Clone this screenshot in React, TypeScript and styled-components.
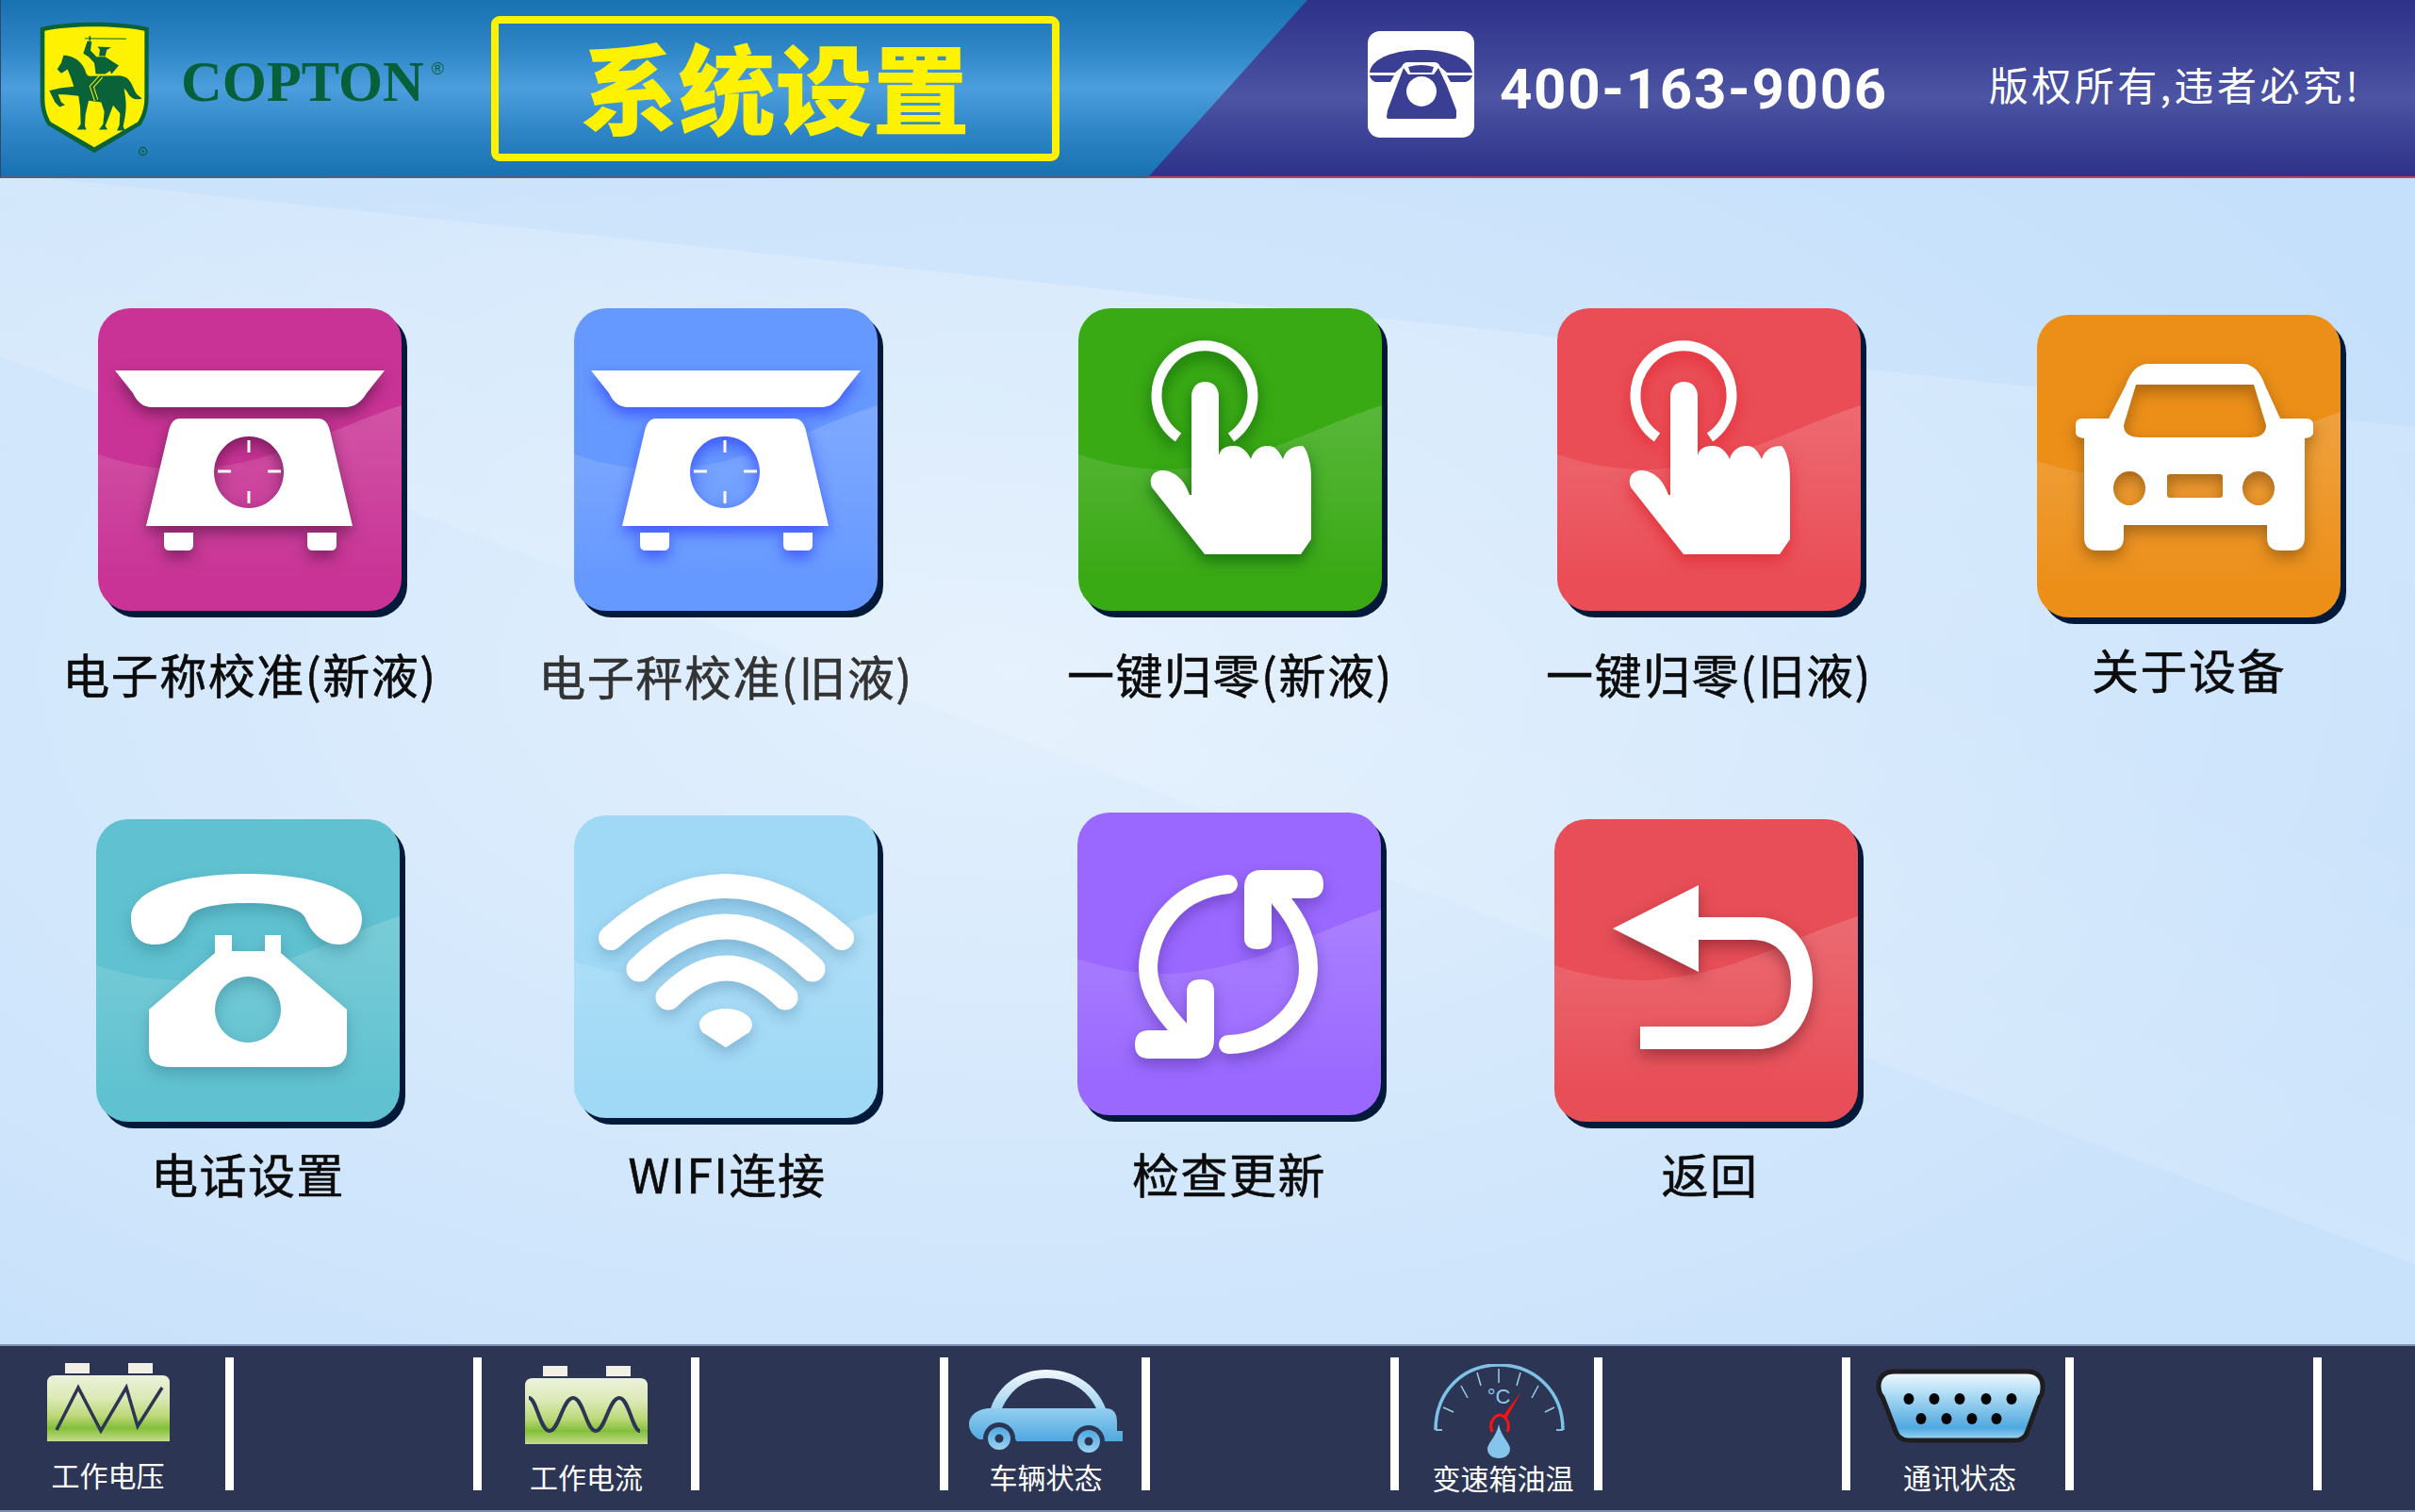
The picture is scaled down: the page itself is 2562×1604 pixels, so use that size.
import React from "react";
import styled, { createGlobalStyle } from "styled-components";

const CJK = '"Noto Sans CJK SC", "Noto Sans", sans-serif';

const Global = createGlobalStyle`
  html, body { margin: 0; padding: 0; background: #cfe5fc; }
  #root { width: 2562px; height: 1604px; overflow: hidden; }
`;

const Page = styled.div`
  width: 2562px;
  height: 1604px;
  display: flex;
  flex-direction: column;
  font-family: ${CJK};
  overflow: hidden;
`;

const Header = styled.header`
  flex: 0 0 189px;
  box-sizing: border-box;
  display: flex;
  border-bottom: 2px solid #56606f;
  border-left: 1px solid #36485f;
  background: linear-gradient(180deg, #1871b0 0%, #2e86c6 28%, #4c9edd 50%, #2e86c6 74%, #1871b0 100%);
`;

const HeaderLeft = styled.div`
  flex: 0 0 1216px;
  display: flex;
  align-items: center;
`;

const Shield = styled.svg`
  flex: none;
  width: 120px;
  height: 147px;
  margin-left: 39px;
`;

const Brand = styled.div`
  flex: 0 0 329px;
  margin-left: 32px;
  padding-bottom: 14px;
  font-family: "Liberation Serif", serif;
  font-weight: 700;
  font-size: 60.5px;
  line-height: 60px;
  color: #06603a;
  white-space: nowrap;
  sup {
    font-family: "Liberation Sans", sans-serif;
    font-weight: 400;
    font-size: 18px;
    line-height: 0;
    vertical-align: 28px;
    margin-left: 8px;
  }
`;

const TitleBox = styled.div`
  flex: 0 0 603px;
  box-sizing: border-box;
  height: 154px;
  padding-bottom: 6px;
  border: 8px solid #fff200;
  border-radius: 9px;
  display: flex;
  align-items: center;
  justify-content: center;
  color: #fff200;
  font-size: 103px;
  font-weight: 900;
  line-height: 1;
  white-space: nowrap;
`;

const HeaderRight = styled.div`
  flex: 1;
  margin-bottom: -2px;
  box-sizing: border-box;
  display: flex;
  align-items: center;
  padding-left: 234px;
  border-bottom: 2px solid #c8404f;
  background: linear-gradient(180deg, #2e3289 0%, #3c4296 28%, #4c54a3 55%, #3c4296 78%, #2e3289 100%);
  clip-path: polygon(170px 0, 100% 0, 100% 100%, 0 100%);
`;

const PhoneBadge = styled.div`
  flex: none;
  width: 113px;
  height: 113px;
  margin-bottom: 8px;
  border-radius: 13px;
  background: #fff;
  display: flex;
`;

const PhoneNumber = styled.div`
  flex: none;
  margin-left: 27px;
  margin-top: 2px;
  font-family: Roboto, sans-serif;
  font-weight: 700;
  font-size: 60px;
  letter-spacing: 1.7px;
  line-height: 1;
  color: #fff;
  white-space: nowrap;
`;

const Rights = styled.div`
  flex: none;
  margin-left: 107px;
  margin-bottom: 10px;
  font-size: 42px;
  letter-spacing: 3.4px;
  line-height: 1;
  color: #fff;
  white-space: nowrap;
`;

const Main = styled.main`
  flex: 1;
  min-height: 0;
  background:
    linear-gradient(186deg, rgba(186, 218, 250, 0.28) 262px, rgba(255, 255, 255, 0.06) 263px, transparent 620px),
    linear-gradient(200.6deg, transparent 650px, rgba(255, 255, 255, 0.13) 1078px, transparent 1079px),
    radial-gradient(ellipse 1700px 900px at 42% 42%, #e3f0fd 0%, #d6e9fc 50%, #c9e2fb 100%);
`;

const TileRow = styled.div<{ $h: number }>`
  height: ${(p) => p.$h}px;
  display: flex;
  align-items: flex-start;
`;

const Item = styled.div<{ $ml: number; $mt: number }>`
  flex: 0 0 322px;
  width: 322px;
  min-width: 0;
  margin-left: ${(p) => p.$ml}px;
  margin-top: ${(p) => p.$mt}px;
  display: flex;
  flex-direction: column;
  align-items: center;
`;

const Tile = styled.div<{ $c: string }>`
  flex: none;
  width: 322px;
  height: 321px;
  border-radius: 34px;
  background: ${(p) => p.$c};
  box-shadow: 6px 7px 0 #021a3a;
  overflow: hidden;
`;

const TileArt = styled.svg`
  display: block;
  width: 322px;
  height: 321px;
`;

const Glyph = styled.g<{ $s: string }>`
  filter: drop-shadow(0 7px 8px ${(p) => p.$s});
`;

const Label = styled.div<{ $mt: number; $c?: string; $dx?: number }>`
  flex: none;
  margin-top: ${(p) => p.$mt}px;
  margin-left: ${(p) => p.$dx ?? 0}px;
  font-size: 50px;
  line-height: 50px;
  letter-spacing: 1.5px;
  color: ${(p) => p.$c ?? "#0c0c0c"};
  -webkit-text-stroke: 0.6px currentColor;
  white-space: nowrap;
`;

const Footer = styled.footer`
  flex: 0 0 178px;
  box-sizing: border-box;
  display: flex;
  align-items: flex-start;
  background: #2c3654;
  border-top: 2px solid #7d8fb0;
  border-bottom: 2px solid #7d8fb0;
`;

const Divider = styled.div`
  flex: 0 0 9px;
  height: 141px;
  margin-top: 12px;
  background: #fff;
`;

const Segment = styled.div<{ $w: number }>`
  flex: 0 0 ${(p) => p.$w}px;
  display: flex;
  flex-direction: column;
  align-items: center;
`;

const Stat = styled.svg<{ $mt: number; $dx?: number }>`
  display: block;
  margin-top: ${(p) => p.$mt}px;
  margin-left: ${(p) => p.$dx ?? 0}px;
`;

const StatLabel = styled.div<{ $mt: number; $dx?: number }>`
  margin-top: ${(p) => p.$mt}px;
  margin-left: ${(p) => p.$dx ?? 0}px;
  font-size: 30px;
  line-height: 30px;
  color: #fff;
  white-space: nowrap;
`;

function ScaleIcon({ s }: { s: string }) {
  return (
    <Glyph $s={s}>
      <path
        fillRule="evenodd"
        fill="#fff"
        d="M18 66H304L285 90Q276 105 262 105H57Q44 105 37 90ZM87 117H233Q243 117 246 130L270 231H51L75 130Q78 117 87 117ZM160 136A37 38 0 1 0 160.01 136Z"
      />
      <path fill="#fff" d="M70 238H101V251Q101 257 95 257H76Q70 257 70 251ZM222 238H253V251Q253 257 247 257H228Q222 257 222 251Z" />
      <path stroke="#fff" strokeWidth="3" d="M160 140V153M160 194V207M127 173H141M180 173H194" />
    </Glyph>
  );
}

function HandIcon({ s }: { s: string }) {
  return (
    <Glyph $s={s}>
      <path d="M106 137A51 53 0 1 1 162 137" fill="none" stroke="#fff" strokeWidth="11" />
      <path
        fill="#fff"
        d="M120 92Q122 78 134.5 78Q147 78 149 92V156C151 148 158 146 165 146C172 146 178 150 183 160C186 150 193 146 201 146C208 146 212 150 217 160C220 150 228 146 238 146C243 150 247 165 247 178V245L236 261H134L78 190C74 180 80 172 89 172C100 172 112 180 118 198L120 198Z"
      />
    </Glyph>
  );
}

function CarIcon({ s }: { s: string }) {
  return (
    <Glyph $s={s}>
      <path
        fillRule="evenodd"
        fill="#fff"
        d="M118 52H218Q234 52 242 75L258 110H286Q293 110 293 117V125Q293 130 284 131V236Q284 250 270 250H258Q244 250 244 236V223H92V236Q92 250 78 250H64Q50 250 50 236V131Q41 130 41 125V117Q41 110 48 110H76L94 75Q102 52 118 52ZM105 74L92 117Q92 130 110 130H226Q243 130 243 117L230 74ZM98 166A17 18 0 1 0 98.01 166ZM235 166A17 18 0 1 0 235.01 166ZM141 169H194Q197 169 197 172V191Q197 194 194 194H141Q138 194 138 191V172Q138 169 141 169Z"
      />
    </Glyph>
  );
}

function PhoneIcon({ s }: { s: string }) {
  return (
    <Glyph $s={s}>
      <path
        fill="#fff"
        d="M37 105C37 75 90 58 160 58C230 58 282 75 282 105C282 125 268 133 258 133C240 133 228 120 222 105C218 95 195 89 160 89C125 89 102 95 98 105C92 120 82 133 62 133C48 133 37 125 37 105Z"
      />
      <path
        fillRule="evenodd"
        fill="#fff"
        d="M126 123H144V140H179V123H196V142L266 202V245Q266 263 243 263H80Q56 263 56 245V202L126 142ZM161 167A35 35 0 1 0 161.01 167Z"
      />
    </Glyph>
  );
}

function WifiIcon({ s }: { s: string }) {
  return (
    <Glyph $s={s}>
      <g fill="none" stroke="#fff" strokeLinecap="round">
        <path strokeWidth="26" d="M39 130Q161 20 284 130" />
        <path strokeWidth="27" d="M69 163Q161 73 253 163" />
        <path strokeWidth="27" d="M100 193Q161 131 224 193" />
      </g>
      <path fill="#fff" d="M161 205C175 205 189 212 189 222C189 226 187 228 186 230L163 245Q161 247 159 245L136 230C135 228 133 226 133 222C133 212 147 205 161 205Z" />
    </Glyph>
  );
}

function SyncIcon({ s }: { s: string }) {
  return (
    <Glyph $s={s}>
      <g fill="none" stroke="#fff" strokeWidth="20" strokeLinecap="round">
        <path d="M160 76C100 82 75 130 75 165C75 190 90 210 110 232" />
        <path d="M215 92C235 115 245 140 245 165C245 205 210 245 160 246" />
      </g>
      <path fill="#fff" d="M195 61H246Q261 61 261 76Q261 91 246 91H206V133Q206 145 191 145Q177 145 177 133V80Q177 61 195 61Z" />
      <path fill="#fff" d="M131 177Q145 177 145 190V240Q145 261 125 261H76Q61 261 61 246Q61 231 76 231H116V190Q116 177 131 177Z" />
    </Glyph>
  );
}

function BackIcon({ s }: { s: string }) {
  return (
    <Glyph $s={s}>
      <path
        fill="#fff"
        d="M62 116L153 70V104H215C250 104 274 130 274 172C274 215 250 244 215 244H91V220H210C235 220 251 205 251 172C251 145 235 128 210 128H153V162Z"
      />
    </Glyph>
  );
}

type TileDef = {
  c: string;
  s: string;
  icon: React.ComponentType<{ s: string }>;
  label: string;
  ml: number;
  mt: number;
  lm: number;
  lc?: string;
  ldx?: number;
};

const rowOne: TileDef[] = [
  { c: "#c93395", s: "rgba(70,15,60,.6)", icon: ScaleIcon, label: "电子称校准(新液)", ml: 104, mt: 138, lm: 41 },
  { c: "#6699ff", s: "#3d55ff", icon: ScaleIcon, label: "电子秤校准(旧液)", ml: 183, mt: 138, lm: 43, lc: "#333" },
  { c: "#39a914", s: "rgba(10,90,10,.7)", icon: HandIcon, label: "一键归零(新液)", ml: 213, mt: 138, lm: 41 },
  { c: "#ea4d56", s: "rgba(225,40,50,.8)", icon: HandIcon, label: "一键归零(旧液)", ml: 186, mt: 138, lm: 41 },
  { c: "#ec8f19", s: "rgba(120,70,10,.6)", icon: CarIcon, label: "关于设备", ml: 187, mt: 145, lm: 29 },
];

const rowTwo: TileDef[] = [
  { c: "#60c2d0", s: "rgba(40,110,130,.4)", icon: PhoneIcon, label: "电话设置", ml: 102, mt: 20, lm: 29 },
  { c: "#a0d9f6", s: "rgba(60,110,150,.35)", icon: WifiIcon, label: "WIFI连接", ml: 185, mt: 16, lm: 33, ldx: 3 },
  { c: "#9a68ff", s: "rgba(60,30,130,.4)", icon: SyncIcon, label: "检查更新", ml: 212, mt: 13, lm: 36 },
  { c: "#e84e57", s: "rgba(90,20,30,.5)", icon: BackIcon, label: "返回", ml: 184, mt: 20, lm: 29, ldx: 8 },
];

function TileItem({ t, id }: { t: TileDef; id: string }) {
  const Icon = t.icon;
  return (
    <Item $ml={t.ml} $mt={t.mt}>
      <Tile $c={t.c}>
        <TileArt viewBox="0 0 322 321">
          <defs>
            <linearGradient id={id} x1="0" y1="0" x2="0" y2="1">
              <stop offset="0" stopColor="#fff" stopOpacity="0.16" />
              <stop offset="0.35" stopColor="#fff" stopOpacity="0.1" />
              <stop offset="0.85" stopColor="#fff" stopOpacity="0" />
            </linearGradient>
          </defs>
          <path fill={`url(#${id})`} d="M0 155C30 166 70 172 100 171C190 165 240 130 322 103V321H0Z" />
          <Icon s={t.s} />
        </TileArt>
      </Tile>
      <Label $mt={t.lm} $c={t.lc} $dx={t.ldx}>
        {t.label}
      </Label>
    </Item>
  );
}

function Battery({ id, d, sw }: { id: string; d: string; sw: number }) {
  return (
    <>
      <defs>
        <linearGradient id={id} x1="0" y1="0" x2="0" y2="1">
          <stop offset="0" stopColor="#ecf2dd" />
          <stop offset="0.35" stopColor="#dbe9b4" />
          <stop offset="0.62" stopColor="#bcd878" />
          <stop offset="0.8" stopColor="#83bf3a" />
          <stop offset="1" stopColor="#c4dc8a" />
        </linearGradient>
      </defs>
      <rect x="19" y="0" width="26" height="11" fill="#f2f0e6" />
      <rect x="86" y="0" width="26" height="11" fill="#f2f0e6" />
      <path fill={`url(#${id})`} d="M8 13H122Q130 13 130 21V83H0V21Q0 13 8 13Z" />
      <path fill="none" stroke="#2c3654" strokeWidth={sw} strokeLinejoin="miter" d={d} />
    </>
  );
}

function CarStat() {
  return (
    <Stat $mt={25} $dx={2} width="163" height="90" viewBox="0 0 163 90">
      <defs>
        <linearGradient id="carRoof" x1="0" y1="0" x2="0" y2="1">
          <stop offset="0" stopColor="#f4f8fd" />
          <stop offset="1" stopColor="#9fd4f1" />
        </linearGradient>
        <linearGradient id="carBody" x1="0" y1="0" x2="0" y2="1">
          <stop offset="0" stopColor="#93cff0" />
          <stop offset="1" stopColor="#4ea8e0" />
        </linearGradient>
        <linearGradient id="carWheel" x1="0" y1="0" x2="0" y2="1">
          <stop offset="0" stopColor="#4ea8e0" />
          <stop offset="1" stopColor="#9bd2f0" />
        </linearGradient>
      </defs>
      <path
        fill="url(#carRoof)"
        d="M23 41C32 15 55 0 82 0C110 0 135 15 145 41H135C125 20 105 9 82 9C60 9 45 20 35 41Z"
      />
      <path fill="url(#carBody)" d="M23 41H145C152 41 157 45 157 55V65H163V76H15C5 72 0 65 0 58C0 48 10 41 23 41Z" />
      <circle cx="32" cy="73" r="17" fill="#2c3654" />
      <circle cx="127" cy="76" r="17" fill="#2c3654" />
      <path fill="#2c3654" d="M10 74H50V90H10ZM110 77H144V90H110Z" />
      <circle cx="32" cy="73" r="12" fill="url(#carWheel)" />
      <circle cx="127" cy="76" r="12" fill="url(#carWheel)" />
      <circle cx="32" cy="73" r="4.5" fill="#2c3654" />
      <circle cx="127" cy="76" r="4.5" fill="#2c3654" />
    </Stat>
  );
}

function GaugeStat() {
  return (
    <Stat $mt={19} $dx={6} width="140" height="100" viewBox="0 0 140 100">
      <path d="M2 70C2 30 30 1 69 1C108 1 137 30 137 70" fill="none" stroke="#7fc2e8" strokeWidth="3.5" />
      <path d="M2 70H9M137 70H130" stroke="#7fc2e8" strokeWidth="2" />
      <path
        d="M10 46L21 51M29 23L36 36M46 9L50 23M69 5V20M92 9L88 23M111 23L104 36M128 46L118 51"
        stroke="#9acde9"
        strokeWidth="1.5"
      />
      <text x="69" y="42" textAnchor="middle" fontFamily="Liberation Sans, sans-serif" fontSize="22" fill="#8ccaee">
        °C
      </text>
      <path d="M93 29L73 56L77 58Z" fill="#ff1010" />
      <path d="M62 72C58 62 64 55 70 54C76 55 82 62 78 72" fill="none" stroke="#ff1010" strokeWidth="3" />
      <path d="M69 64C72 78 81 84 81 90C81 96 76 100 69 100C62 100 57 96 57 90C57 84 66 78 69 64Z" fill="#85c5ec" />
    </Stat>
  );
}

function ConnectorStat() {
  const top = [35, 62, 89, 117, 144];
  const bottom = [48, 75, 102, 128];
  return (
    <Stat $mt={24} $dx={6} width="180" height="79" viewBox="0 0 180 79">
      <defs>
        <linearGradient id="portFace" x1="0" y1="0" x2="0" y2="1">
          <stop offset="0" stopColor="#f4f9fe" />
          <stop offset="0.3" stopColor="#b4def5" />
          <stop offset="0.82" stopColor="#4fa8e0" />
          <stop offset="1" stopColor="#a8d8f2" />
        </linearGradient>
      </defs>
      <path
        fill="url(#portFace)"
        stroke="#1e1e20"
        strokeWidth="5"
        d="M20 3H160Q176 3 177 18Q177 28 174 30L161 66Q158 76 148 76H35Q24 76 21 66L7 30Q3 26 3 18Q4 3 20 3Z"
      />
      {top.map((x) => (
        <ellipse key={x} cx={x} cy="32" rx="5.5" ry="6" fill="#050505" />
      ))}
      {bottom.map((x) => (
        <ellipse key={x} cx={x} cy="53" rx="5.5" ry="6" fill="#050505" />
      ))}
    </Stat>
  );
}

export default function App() {
  return (
    <Page>
      <Global />
      <Header>
        <HeaderLeft>
          <Shield viewBox="60 30 360 440">
            <path fill="#0a6338" d="M68 57C150 35 330 35 413 57V280C413 320 400 350 388 368L240 456L92 368C80 350 68 320 68 280Z" />
            <path fill="#fff200" d="M82 68C160 50 320 50 400 68V280C400 315 390 340 378 358L240 438L102 358C90 340 82 315 82 280Z" />
            <path
              fill="#0a6338"
              d="M142 146L150 146C175 150 205 165 215 205L222 212L320 210C345 212 355 225 365 250C372 268 380 275 392 282C375 290 355 285 345 262L335 250C338 275 345 300 338 340L332 372L338 385L312 385L320 368L322 330L300 305L285 345L275 370L282 382L255 382L268 365L272 325L262 295L222 290L212 335L210 370L215 382L185 382L197 365L195 310L190 275L145 270L125 270L135 295L147 303L130 310L115 295L97 258L130 250L175 245L165 215L155 190L135 203L122 190L135 170Z"
            />
            <path
              fill="#0a6338"
              d="M247 150L275 150L305 170L318 178L295 205L290 195L275 205L245 205L240 170L222 150L205 140L218 100L232 102L228 130ZM250 118L295 120L280 128L275 148L255 148L258 128Z"
            />
            <path fill="none" stroke="#fff200" strokeWidth="14" d="M262 212L232 245L246 288" />
            <path fill="none" stroke="#0a6338" strokeWidth="8" d="M262 212L232 245L246 288" />
            <path stroke="#0a6338" strokeWidth="3" d="M210 92L342 93" />
            <path stroke="#0a6338" strokeWidth="5" d="M226 84L226 100" />
            <circle cx="395" cy="451" r="12" fill="none" stroke="#0a6338" strokeWidth="4" />
            <circle cx="395" cy="451" r="4" fill="#0a6338" />
          </Shield>
          <Brand>
            COPTON<sup>®</sup>
          </Brand>
          <TitleBox>系统设置</TitleBox>
        </HeaderLeft>
        <HeaderRight>
          <PhoneBadge>
            <svg width="113" height="113" viewBox="0 0 113 113">
              <path
                fill="#3a3f94"
                d="M2 44C4 28 30 20 57 20C84 20 108 28 111 44H84L77 38Q75 33 71 33H42Q38 33 36 38L29 44Z"
              />
              <path fill="#3a3f94" d="M2 47H28L24 54H8Q3 52 2 47ZM84 47H111Q110 52 104 54H88Z" />
              <path fill="#3a3f94" d="M43 38Q57 34 70 38L68 44H45Z" />
              <path
                fillRule="evenodd"
                fill="#3a3f94"
                d="M38 39L43 46H70L75 39L84 58L94 84V91Q94 93 92 93H22Q20 93 20 91L21 84L30 60ZM57 48A16 16 0 1 0 57.01 48Z"
              />
            </svg>
          </PhoneBadge>
          <PhoneNumber>400-163-9006</PhoneNumber>
          <Rights>版权所有,违者必究!</Rights>
        </HeaderRight>
      </Header>
      <Main>
        <TileRow $h={660}>
          {rowOne.map((t, i) => (
            <TileItem key={t.label} t={t} id={`waveA${i}`} />
          ))}
        </TileRow>
        <TileRow $h={577}>
          {rowTwo.map((t, i) => (
            <TileItem key={t.label} t={t} id={`waveB${i}`} />
          ))}
        </TileRow>
      </Main>
      <Footer>
        <Segment $w={239}>
          <Stat $mt={18} width="130" height="83" viewBox="0 0 130 83" $dx={-10}>
            <Battery id="batA" sw={3.5} d="M10 71L33 26L57 72L84 26L96 67L122 26" />
          </Stat>
          <StatLabel $mt={20} $dx={-10}>工作电压</StatLabel>
        </Segment>
        <Divider />
        <Segment $w={254} />
        <Divider />
        <Segment $w={222}>
          <Stat $mt={21} width="130" height="83" viewBox="0 0 130 83">
            <Battery
              id="batB"
              sw={4}
              d="M4 34C12 34 16 69 26 69C36 69 40 34 51 34C62 34 65 69 75 69C85 69 89 34 100 34C110 34 114 69 122 69"
            />
          </Stat>
          <StatLabel $mt={19}>工作电流</StatLabel>
        </Segment>
        <Divider />
        <Segment $w={255} />
        <Divider />
        <Segment $w={205}>
          <CarStat />
          <StatLabel $mt={8} $dx={2}>车辆状态</StatLabel>
        </Segment>
        <Divider />
        <Segment $w={255} />
        <Divider />
        <Segment $w={207}>
          <GaugeStat />
          <StatLabel $mt={5} $dx={14}>变速箱油温</StatLabel>
        </Segment>
        <Divider />
        <Segment $w={254} />
        <Divider />
        <Segment $w={228}>
          <ConnectorStat />
          <StatLabel $mt={20} $dx={4}>通讯状态</StatLabel>
        </Segment>
        <Divider />
        <Segment $w={254} />
        <Divider />
      </Footer>
    </Page>
  );
}
